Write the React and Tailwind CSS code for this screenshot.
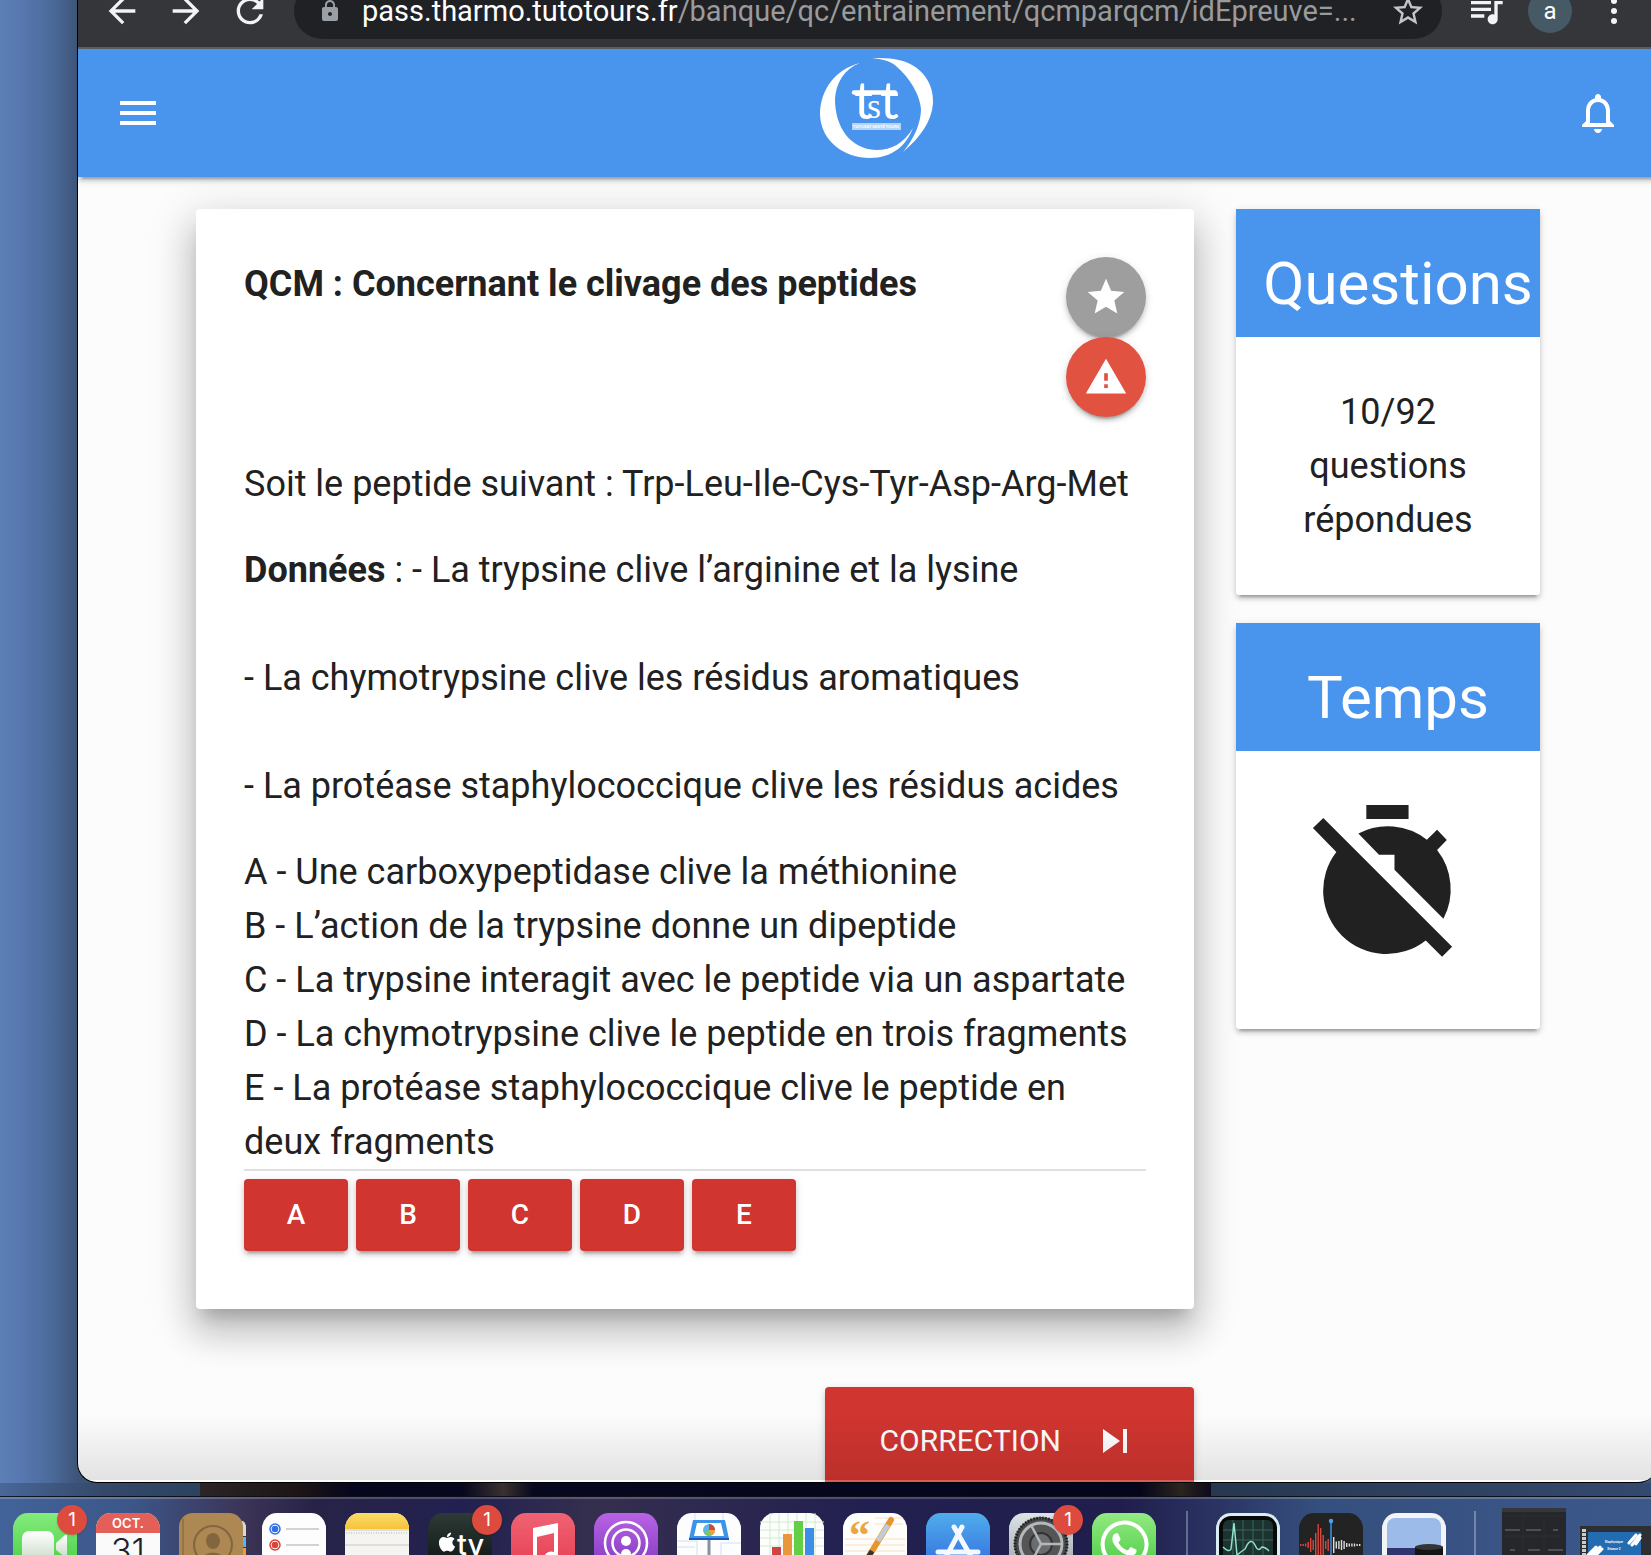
import React, { useState } from 'react';
import {
  MdArrowBack,
  MdArrowForward,
  MdLock,
  MdMenu,
  MdNotificationsNone,
  MdQueueMusic,
  MdRefresh,
  MdSkipNext,
  MdStar,
  MdStarBorder,
  MdWarning
} from 'react-icons/md';
import { FaApple, FaWhatsapp } from 'react-icons/fa';

const ELEVATION_2 = 'shadow-[0_6px_2px_-4px_rgba(0,0,0,0.2),0_4px_4px_0_rgba(0,0,0,0.14),0_2px_10px_0_rgba(0,0,0,0.12)]';
const ELEVATION_12 = 'shadow-[0_14px_16px_-8px_rgba(0,0,0,0.2),0_24px_34px_4px_rgba(0,0,0,0.14),0_10px_44px_8px_rgba(0,0,0,0.12)]';

const propositions = [
  { letter: 'A', text: 'Une carboxypeptidase clive la méthionine' },
  { letter: 'B', text: 'L’action de la trypsine donne un dipeptide' },
  { letter: 'C', text: 'La trypsine interagit avec le peptide via un aspartate' },
  { letter: 'D', text: 'La chymotrypsine clive le peptide en trois fragments' },
  { letter: 'E', text: 'La protéase staphylococcique clive le peptide en deux fragments' }
];

const Logo = () => (
  <svg viewBox="0 0 120 128" className="ml-4 h-32 w-[120px]" role="img" aria-label="TST">
    <g fill="#fff">
      <path d="M44 14C20 20 4 40 4 66C5 92 28 109 54 109C76 109 90 97 97 79C88 94 76 101 60 101C34 100 19 78 19 50C20 34 28 20 44 14Z" />
      <path d="M56 9.300C62 8.500 68 9 74 9.500C102 12 118 31 117 54C116 72 104 89 87 103C98 90 105 74 105 60C104 46 94 29 80 17C74 12 66 10 56 9.300Z" />
      <rect x="36" y="74" width="49" height="7" opacity="0.6" />
    </g>
    <path d="M38 43.500H79" stroke="#fff" strokeWidth="4.500" strokeLinecap="round" />
    <g fill="#fff">
      <text x="38" y="70" fontSize="53" className="font-['Lato',sans-serif]">t</text>
      <text x="64" y="70" fontSize="53" className="font-['Lato',sans-serif]">t</text>
      <text x="51" y="69" fontSize="36" className="font-['Liberation_Serif',serif]">s</text>
      <text x="37" y="79" fontSize="4" fontWeight="700" className="font-['Lato',sans-serif]">TUTORAT SANTÉ TOURS</text>
    </g>
  </svg>
);

const TimerOff = () => (
  <svg viewBox="0.150 0.150 24 24" className="h-[169px] w-[169px]" fill="#212121">
    <path d="M9 1h6v2H9z" />
    <path d="M7.870 5.060A9 9 0 0 1 17.600 5.940L19.050 4.500L20.430 5.970L19.050 7.400A9 9 0 0 1 19.950 17.150L13 10.200V8.060H10.800Z" />
    <path d="M1.420 4.270L2.890 2.840L21.180 21.140L19.760 22.560L17.440 20.240A9 9 0 0 1 4.740 7.680Z" />
  </svg>
);

const BrowserBar = () => (
  <div className="flex h-[49px] shrink-0 items-start overflow-hidden border-b-2 border-[#5f6063] bg-[#35363a] pl-6 text-[#f1f3f4]">
    <div className="-mt-[9px] flex shrink-0 gap-6">
      <button aria-label="Précédent"><MdArrowBack size={40} /></button>
      <button aria-label="Suivant"><MdArrowForward size={40} /></button>
      <button aria-label="Actualiser"><MdRefresh size={40} /></button>
    </div>
    <div className="-mt-[17px] ml-6 flex h-14 min-w-0 flex-1 items-center rounded-full bg-[#202124] pl-6 pr-4">
      <MdLock size={24} className="shrink-0 text-[#9aa0a6]" />
      <p className="ml-5 min-w-0 flex-1 overflow-hidden whitespace-nowrap text-[29px] leading-9 text-[#9a9b9d]">
        <span className="text-white">pass.tharmo.tutotours.fr</span>/banque/qc/entrainement/qcmparqcm/idEpreuve=...
      </p>
      <button aria-label="Ajouter aux favoris" className="shrink-0 text-[#c4c5c7]"><MdStarBorder size={36} /></button>
    </div>
    <div className="-mt-[11px] flex shrink-0 items-center pl-6 pr-6">
      <button aria-label="Lecture en cours"><MdQueueMusic size={40} /></button>
      <button aria-label="Profil" className="ml-[22px] h-11 w-11 rounded-full bg-[#455a64] text-[24px] leading-[44px] text-white">a</button>
      <button aria-label="Menu" className="ml-[22px]">
        <svg viewBox="0 0 40 40" className="h-10 w-10" fill="currentColor">
          <circle cx="20" cy="10" r="3" />
          <circle cx="20" cy="20" r="3" />
          <circle cx="20" cy="30" r="3" />
        </svg>
      </button>
    </div>
  </div>
);

const SideCard = ({ title, children }) => (
  <section className={`rounded ${ELEVATION_2}`}>
    <h2 className="flex h-32 items-center justify-center bg-[#4994ec] pl-5 pt-[22px] text-[60px] leading-none text-white">{title}</h2>
    <div className="rounded bg-white px-12 py-12 text-center">{children}</div>
  </section>
);

const QuestionCard = () => {
  const [answers, setAnswers] = useState([]);

  const toggle = (letter) => {
    setAnswers(prev => prev.includes(letter) ? prev.filter(l => l !== letter) : [...prev, letter]);
  };

  return (
    <article className={`rounded bg-white px-12 pb-[58px] pt-12 ${ELEVATION_12}`}>
      <div className="flex items-start justify-between">
        <h1 className="font-bold">QCM : Concernant le clivage des peptides</h1>
        <div className="flex flex-col">
          <button aria-label="Favori" className={`flex h-20 w-20 items-center justify-center rounded-full bg-[#9e9e9e] text-white ${ELEVATION_2}`}>
            <MdStar size={44} />
          </button>
          <button aria-label="Signaler" className={`flex h-20 w-20 items-center justify-center rounded-full bg-[#e25241] text-white ${ELEVATION_2}`}>
            <MdWarning size={44} />
          </button>
        </div>
      </div>
      <p className="mt-10">Soit le peptide suivant : Trp-Leu-Ile-Cys-Tyr-Asp-Arg-Met</p>
      <p className="mt-8"><strong className="font-bold">Données</strong> : - La trypsine clive l’arginine et la lysine</p>
      <p className="mt-[54px]">- La chymotrypsine clive les résidus aromatiques</p>
      <p className="mt-[54px]">- La protéase staphylococcique clive les résidus acides</p>
      <ul className="mt-8">
        {propositions.map(p => (
          <li key={p.letter}>{p.letter} - {p.text}</li>
        ))}
      </ul>
      <hr className="border-t-2 border-[#e0e0e0]" />
      <div className="mt-2 flex gap-2">
        {propositions.map(p => (
          <button
            key={p.letter}
            aria-pressed={answers.includes(p.letter)}
            onClick={() => toggle(p.letter)}
            className={`h-[72px] w-[104px] rounded bg-[#d03530] text-[28px] font-medium text-white ${ELEVATION_2}`}
          >
            {p.letter}
          </button>
        ))}
      </div>
    </article>
  );
};

const DockIcon = ({ label, badge, children }) => (
  <button aria-label={label} className="relative h-16 w-16 shrink-0">
    <svg viewBox="0 0 64 64" className="h-16 w-16 overflow-visible">{children}</svg>
    {badge && (
      <span className="absolute -top-2 left-11 h-[30px] w-[30px] rounded-full bg-[#dd4b3e] text-center font-['Inter',sans-serif] text-[19px] leading-[30px] text-white shadow">
        {badge}
      </span>
    )}
  </button>
);

const Tile = ({ fill }) => <rect width="64" height="64" rx="15" fill={fill} />;

const Gradient = ({ id, from, to }) => (
  <linearGradient id={id} x1="0" y1="0" x2="0" y2="1">
    <stop offset="0" stopColor={from} />
    <stop offset="1" stopColor={to} />
  </linearGradient>
);

const waves = [2, 2, 3, 6, 14, 10, 24, 42, 34, 20, 8, 12];
const quietWaves = [16, 7, 8, 10, 8, 4, 3, 3, 3, 2, 2];

const Dock = () => (
  <nav aria-label="Dock" className="flex h-[58px] shrink-0 items-start overflow-hidden border-t-2 border-white/20 bg-linear-[90deg,#42639a_0%,#3c5688_8%,#3b3355_15%,#272347_19%,#222050_28%,#352f4f_36%,#222050_52%,#201e4c_68%,#2b3564_74%,#35507e_80%,#3c578a_100%]">
    <div className="flex shrink-0 gap-[19px] pl-[13px] pt-3.5">
      <DockIcon label="FaceTime" badge="1">
        <Gradient id="green" from="#84ec7c" to="#3fc93c" />
        <Gradient id="camera" from="#ffffff" to="#c9dcc9" />
        <Tile fill="url(#green)" />
        <rect x="9" y="18" width="32" height="30" rx="7" fill="url(#camera)" />
        <path d="M43 30l9-8q2-1 2 1v20q0 2-2 1l-9-7z" fill="url(#camera)" />
      </DockIcon>
      <DockIcon label="Calendrier">
        <Tile fill="#fafafa" />
        <path d="M0 20V15A15 15 0 0 1 15 0H49A15 15 0 0 1 64 15V20Z" fill="#e35f57" />
        <text x="32" y="15" textAnchor="middle" fontSize="13" fontWeight="600" fill="#fff" className="font-['Inter',sans-serif]">OCT.</text>
        <text x="32" y="50" textAnchor="middle" fontSize="34" fontWeight="300" fill="#222" className="font-['Inter',sans-serif]">31</text>
      </DockIcon>
      <DockIcon label="Contacts">
        <path d="M60 8h4q3 2 3 5v10h-7z" fill="#d8d8d6" />
        <path d="M60 24h7v10h-7z" fill="#5eb5e5" />
        <path d="M60 35h7v20h-7z" fill="#ef9a36" />
        <rect width="64" height="64" rx="14" fill="#ad8853" />
        <path d="M4 6V64" stroke="#806035" />
        <circle cx="34" cy="32" r="19" fill="none" stroke="#82663f" strokeWidth="2" />
        <ellipse cx="34" cy="28" rx="7" ry="8" fill="#82663f" />
        <path d="M20 46q14-13 28 0z" fill="#82663f" />
      </DockIcon>
      <DockIcon label="Rappels">
        <Tile fill="#fdfdfd" />
        <g fill="none" strokeWidth="1.500">
          <circle cx="13" cy="16" r="5" stroke="#2f70ea" />
          <circle cx="13" cy="32" r="5" stroke="#db4437" />
        </g>
        <circle cx="13" cy="16" r="3.300" fill="#2f70ea" />
        <circle cx="13" cy="32" r="3.300" fill="#db4437" />
        <path d="M24 16H57M24 32H57" stroke="#c4c4c4" strokeWidth="1.500" />
      </DockIcon>
      <DockIcon label="Notes">
        <Gradient id="yellow" from="#fbdc68" to="#f5c33b" />
        <Tile fill="#f5f4f1" />
        <path d="M0 16V15A15 15 0 0 1 15 0H49A15 15 0 0 1 64 15V16Z" fill="url(#yellow)" />
        <path d="M0 17H64M0 32H64" stroke="#ccc9c0" />
        <path d="M1 20H63" stroke="#b5b3ac" strokeDasharray="1 1.500" />
      </DockIcon>
      <DockIcon label="TV" badge="1">
        <Gradient id="tv" from="#2d3a36" to="#0b1010" />
        <Tile fill="url(#tv)" />
        <FaApple x="8" y="18" size={22} color="#fff" />
        <text x="29" y="42" fontSize="29" fontWeight="500" fill="#fff" className="font-['Inter',sans-serif]">tv</text>
      </DockIcon>
      <DockIcon label="Musique">
        <Gradient id="music" from="#ef6373" to="#e63a4d" />
        <Tile fill="url(#music)" />
        <path d="M22 15L47 10V46A7 6 0 1 1 43 39V20L26 24V50A7 6 0 1 1 22 43Z" fill="#fff" />
      </DockIcon>
      <DockIcon label="Podcasts">
        <Gradient id="podcasts" from="#b863e4" to="#7c34bd" />
        <Tile fill="url(#podcasts)" />
        <g fill="none" stroke="#fff" strokeWidth="2.500">
          <circle cx="32" cy="30" r="21" />
          <circle cx="32" cy="30" r="13.500" />
        </g>
        <circle cx="32" cy="28" r="5" fill="#fff" />
        <rect x="27" y="36" width="10" height="20" rx="5" fill="#fff" />
      </DockIcon>
      <DockIcon label="Keynote">
        <Tile fill="#fdfdfd" />
        <path d="M18 0V10M46 0V10M0 28H20V64M0 34H18M44 64V30H64" fill="none" stroke="#cfe2f6" />
        <path d="M32 26V64" stroke="#8791a1" strokeWidth="3" />
        <path d="M16 7H48L52 26H12Z" fill="#3c94e8" />
        <path d="M12 25H52V27H12Z" fill="#1c5bb5" />
        <path d="M20 10H44L47 23H17Z" fill="#fff" />
        <circle cx="32" cy="17" r="6" fill="#5ab7e8" />
        <path d="M32 17V11A6 6 0 0 1 38 17Z" fill="#d7433f" />
        <path d="M32 17H38A6 6 0 0 1 34 22.600Z" fill="#f0a13a" />
        <path d="M32 17L34 22.600A6 6 0 0 1 27 20Z" fill="#7fc855" />
      </DockIcon>
      <DockIcon label="Numbers">
        <Tile fill="#fdfdfd" />
        <path d="M10 0V64M19 0V64M28 0V64M37 0V64M46 0V64M55 0V64M0 9H64M0 17H64M0 25H64M0 33H64" stroke="#cfeccb" />
        <rect x="12" y="34" width="9" height="30" fill="#cf4347" />
        <rect x="23" y="21" width="9" height="43" fill="#e8973a" />
        <rect x="34" y="8" width="9" height="56" fill="#63cf45" />
        <rect x="45" y="15" width="9" height="49" fill="#3b8fe6" />
      </DockIcon>
      <DockIcon label="Pages">
        <Tile fill="#fdfdfb" />
        <path d="M32 5H60M32 11H60M2 26H62M2 32H62M2 38H62" stroke="#f8dfc0" />
        <text x="6" y="36" fontSize="42" fontWeight="700" fill="#eba63f" className="font-['Liberation_Serif',serif]">“</text>
        <path d="M26 43L48 7" stroke="#e9952f" strokeWidth="6" strokeLinecap="round" />
        <path d="M35 28L45 12" stroke="#c3cbd2" strokeWidth="5" />
        <path d="M23 48L29 38" stroke="#333" strokeWidth="5" />
      </DockIcon>
      <DockIcon label="App Store">
        <Gradient id="store" from="#50adec" to="#2e64dd" />
        <Tile fill="url(#store)" />
        <path d="M12 39H52M36 14L19 46M28 14L47 47" stroke="#f4f9ff" strokeWidth="5" strokeLinecap="round" />
      </DockIcon>
      <DockIcon label="Préférences Système" badge="1">
        <Gradient id="steel" from="#dce4e8" to="#9a9fa3" />
        <Tile fill="url(#steel)" />
        <circle cx="32" cy="31" r="27" fill="#4a4b4c" />
        <circle cx="32" cy="31" r="26" fill="none" stroke="#222" strokeWidth="3" strokeDasharray="1.500 1.500" />
        <circle cx="32" cy="31" r="21" fill="#555" stroke="#b5b8ba" strokeWidth="3" />
        <circle cx="32" cy="31" r="11" fill="#6b6c6d" stroke="#333" strokeWidth="2" />
        <path d="M32 31L22 12M32 31H53M32 31L22 50" stroke="#b5b8ba" strokeWidth="2.500" />
      </DockIcon>
      <DockIcon label="WhatsApp">
        <Gradient id="whatsapp" from="#93ea82" to="#41c83c" />
        <Tile fill="url(#whatsapp)" />
        <FaWhatsapp x="5" y="4" size={55} color="#fff" />
      </DockIcon>
    </div>
    <span className="ml-[30px] mt-3 h-16 w-0.5 shrink-0 bg-white/30" />
    <div className="flex shrink-0 gap-[19px] pl-7 pt-3.5">
      <DockIcon label="Moniteur d’activité">
        <Tile fill="#d9edf2" />
        <rect x="3" y="3" width="58" height="61" rx="12" fill="#080a0a" />
        <rect x="7" y="7" width="50" height="57" rx="6" fill="#1d3330" />
        <path d="M17 7V64M27 7V64M37 7V64M47 7V64M7 17H57M7 27H57" stroke="#3b655c" />
        <path d="M7 34Q13 40 15 36L18 10L21 42Q26 38 29 36Q35 22 40 34Q42 39 46 34Q49 34 53 38" fill="none" stroke="#8fe3ca" strokeWidth="1.500" />
      </DockIcon>
      <DockIcon label="Dictaphone">
        <Tile fill="#232324" />
        {waves.map((h, i) => <rect key={i} x={1 + i * 2.5} y={32 - h / 2} width="1.400" height={h} fill="#d8473c" />)}
        {quietWaves.map((h, i) => <rect key={i} x={34 + i * 2.6} y={32 - h / 2} width="1.400" height={h} fill="#ddd" />)}
        <path d="M32 8V64" stroke="#3475b8" strokeWidth="2" />
        <circle cx="32" cy="8" r="2.200" fill="#4aa5f0" />
      </DockIcon>
      <DockIcon label="Aperçu">
        <Tile fill="#f3f4f6" />
        <rect x="5" y="5" width="54" height="59" rx="8" fill="#9dbbe9" />
        <path d="M5 35H59V64H5Z" fill="#30356f" />
        <path d="M33 34V64H61V34Z" fill="#151516" />
        <ellipse cx="47" cy="34" rx="14" ry="3" fill="#343435" />
      </DockIcon>
    </div>
    <span className="ml-7 mt-3 h-16 w-0.5 shrink-0 bg-white/30" />
    <button aria-label="Fenêtre réduite" className="ml-[26px] mt-[9px] shrink-0">
      <svg viewBox="0 0 64 64" className="h-16 w-16">
        <path d="M0 0H64V64H0Z" fill="#26272a" />
        <path d="M0 0H64V4H0Z" fill="#36373b" />
        <path d="M3 22H18M24 22H39M51 22H56M8 42H13M26 42H38M46 42H61" stroke="#77787c" />
        <path d="M2 8H62M21 8V64M42 8V64M2 28H62" stroke="#2e2f33" />
      </svg>
    </button>
    <button aria-label="Diaporama réduit" className="ml-3.5 mt-[27px] shrink-0">
      <svg viewBox="0 0 80 48" className="h-12 w-20">
        <path d="M0 0H80V48H0Z" fill="#2e2f33" />
        <path d="M4 3V48" stroke="#c9ccd1" strokeWidth="4" strokeDasharray="3 1" />
        <path d="M8 6H61V48H8Z" fill="#246cb2" />
        <g stroke="#fff" strokeWidth="3" strokeLinecap="round">
          <path d="M49 17L56 9M52 19L60 9M56 18L60 12M8 29L16 21M10 31L20 21M15 30L22 23" />
        </g>
        <g fill="#fff" textAnchor="middle" fontSize="3" fontWeight="700" className="font-['Inter',sans-serif]">
          <text x="34" y="17">Biophysique</text>
          <text x="34" y="24">Séance 2</text>
        </g>
      </svg>
    </button>
  </nav>
);

export default function App() {
  return (
    <div className="flex h-screen flex-col overflow-hidden bg-linear-[90deg,#5c80b6_0px,#5878b0_20px,#4c6b9c_50px,#3d5478_78px] font-['Roboto',sans-serif] text-[36px] leading-[54px] text-[#212121]">
      <div className="relative -mr-[7px] ml-[77px] flex min-h-0 flex-1 flex-col overflow-hidden rounded-b-[20px] border-b border-l border-black bg-[#fcfcfc]">
        <BrowserBar />
        <header className={`z-10 flex h-32 shrink-0 items-center justify-between bg-[#4994ec] px-9 text-white ${ELEVATION_2}`}>
          <button aria-label="Ouvrir le menu"><MdMenu size={48} /></button>
          <Logo />
          <button aria-label="Notifications"><MdNotificationsNone size={48} /></button>
        </header>
        <main className="flex min-h-0 flex-1 items-start gap-[42px] px-[118px] pt-8">
          <div className="flex min-w-0 flex-1 flex-col">
            <QuestionCard />
            <button className={`mt-[78px] flex h-[108px] items-center gap-[30px] self-end rounded bg-[#d03530] px-[55px] text-[30px] text-white ${ELEVATION_2}`}>
              CORRECTION
              <MdSkipNext size={48} />
            </button>
          </div>
          <aside className="flex w-[304px] shrink-0 flex-col gap-7">
            <SideCard title="Questions">
              <p>10/92 questions répondues</p>
            </SideCard>
            <SideCard title="Temps">
              <div className="flex h-[182px] items-start justify-center">
                <TimerOff />
              </div>
            </SideCard>
          </aside>
        </main>
        <div className="pointer-events-none absolute inset-x-0 bottom-0 z-20 h-[68px] border-b-2 border-white/20 bg-linear-to-b from-transparent to-black/10" />
      </div>
      <div className="flex h-3.5 shrink-0 border-b border-black/80">
        <div className="w-[200px] bg-linear-to-r from-[#48689a] via-[#35496b] to-[#2b4260]" />
        <div className="flex-1 bg-linear-[90deg,#2b2526_0%,#1c1416_10%,#06061e_15%,#07071f_26%,#3a3030_30%,#07071f_33%,#05051c_93%,#2c241f_97%,#0c0a1c_100%]" />
        <div className="w-[440px] bg-linear-to-r from-[#263850] to-[#34496f]" />
      </div>
      <Dock />
    </div>
  );
}
